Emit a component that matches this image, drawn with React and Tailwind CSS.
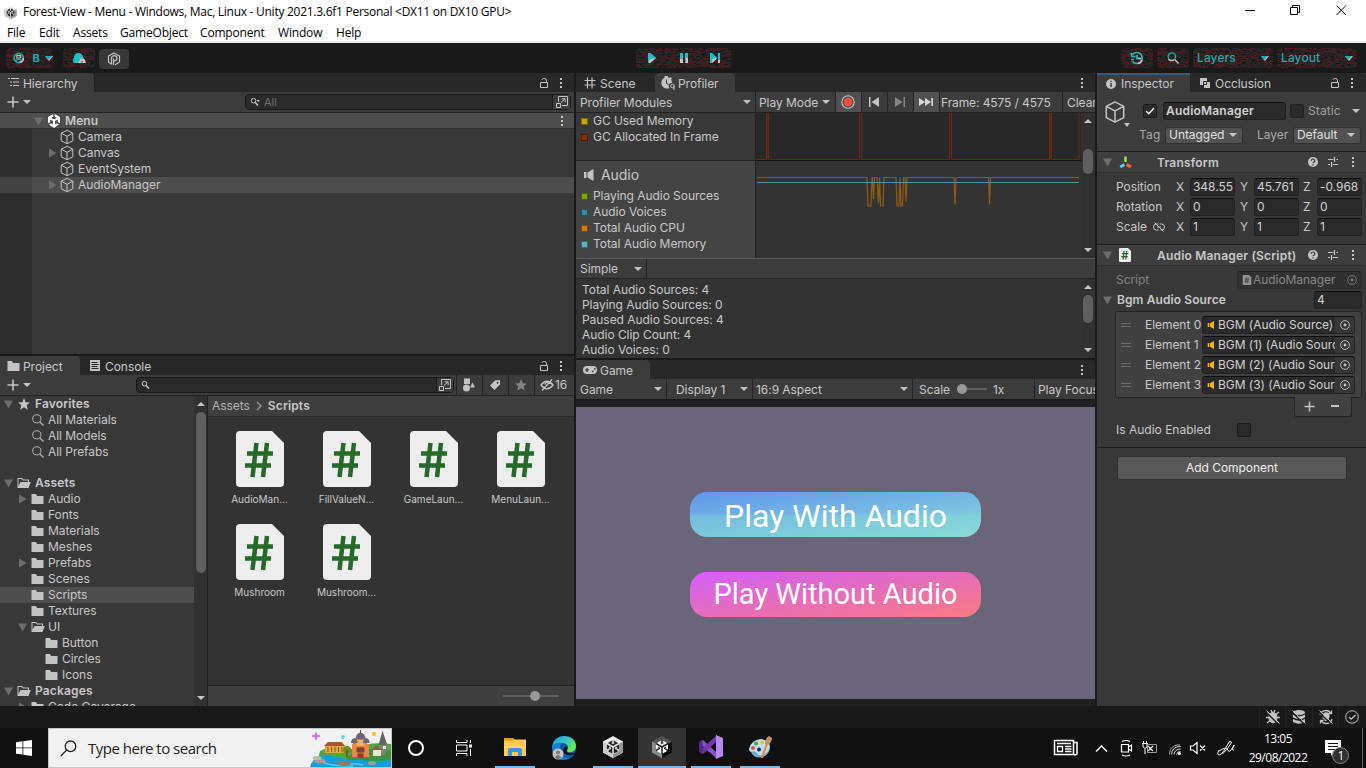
import React from "react";

/* ---------- small shared pieces ---------- */

function Caret({ className = "" }) {
  return (
    <svg className={"h-1 w-2 shrink-0 " + className} viewBox="0 0 8 4" fill="#c4c4c4">
      <path d="M0 0h8L4 4z" />
    </svg>
  );
}

function Fold({ open = false, hidden = false }) {
  return (
    <svg className={"h-2.5 w-2.5 shrink-0 " + (hidden ? "invisible" : "")} viewBox="0 0 10 10" fill="#6d6d6d">
      <path d={open ? "M0 1.500h9L4.500 9.500z" : "M1 0.500l7.500 4.500l-7.500 4.500z"} />
    </svg>
  );
}

function Dots({ className = "" }) {
  return (
    <svg className={"h-3 w-1 shrink-0 " + className} viewBox="0 0 4 12" fill="#c4c4c4">
      <path d="M1 1h2v2H1zM1 5h2v2H1zM1 9h2v2H1z" />
    </svg>
  );
}

function Lock({ className = "" }) {
  return (
    <svg className={"h-3 w-3 shrink-0 " + className} viewBox="0 0 12 12" fill="none" stroke="#c4c4c4">
      <path d="M2.500 5.500h7v5h-7zM8.500 5.500v-2.300a1.800 1.800 0 0 0-1.800-1.700h-1a1.800 1.800 0 0 0-1.700 1.300" />
    </svg>
  );
}

function Cube({ className = "h-4 w-4" }) {
  return (
    <svg className={"shrink-0 " + className} viewBox="0 0 16 16" fill="none" stroke="#c4c4c4" strokeLinejoin="round">
      <path d="M8 1.300l5.800 2.900v7.600L8 14.700l-5.800-2.900V4.200zM2.200 4.200L8 7.300l5.800-3.100M8 7.300v7.400" />
    </svg>
  );
}

function UnityMark({ className = "h-3.5 w-3.5", fill = "#fff" }) {
  return (
    <svg className={"shrink-0 " + className} viewBox="0 0 14 14" fill={fill}>
      <path d="M6.300 0v2.600L4.300 3.800l2.700 1.600l2.700-1.600l-2-1.200V0L13 3.100v6.200l-2.200-1.200V5.400L8 7v3.400l2-1.200l2 1.200L7 14l-5-3.600l2-1.200l2 1.200V7L3.200 5.400v2.700L1 9.300V3.100z" />
    </svg>
  );
}

function UnityCube({ size = "h-6 w-6", dark = false }) {
  return (
    <svg className={"shrink-0 " + size} viewBox="0 0 24 24">
      <path d="M12 1l10 5.500v11L12 23L2 17.500v-11z" fill={dark ? "#555" : "#eee"} />
      <path d="M12 12l10-5.500v11L12 23z" fill={dark ? "#080808" : "#999"} />
      <path d="M2 6.500L12 12v11L2 17.500z" fill={dark ? "#8b8b8b" : "#ccc"} />
      <path d="M12 5l6 3.500v7L12 19l-6-3.500v-7z" fill={dark ? "#fff" : "#222"} />
      <path d="M12 12V19M12 12L6 8.500M12 12l6-3.500M12 5v3M6 15.500l2.500-1.500M18 15.500L15.500 14" stroke={dark ? "#222" : "#e8e8e8"} strokeWidth="1.500" />
      <path d="M10 8l2-1l2 1l-2 1zM8 11.500l2 1v2l-2-1zM16 11.500l-2 1v2l2-1z" fill={dark ? "#333" : "#ddd"} />
    </svg>
  );
}

function Folder({ open = false }) {
  return open ? (
    <svg className="h-3.5 w-3.5 shrink-0" viewBox="0 0 14 14" fill="#c4c4c4">
      <path d="M0.500 2h4.500l1.500 1.500H12V6H11V4.500H6L4.500 3H1.500v7L3.500 6H13.800l-2.300 6H0.500z" />
    </svg>
  ) : (
    <svg className="h-3.5 w-3.5 shrink-0" viewBox="0 0 14 14" fill="#c4c4c4">
      <path d="M0.500 2h4.500l1 2H12.500v8H0.500z" />
    </svg>
  );
}

function Lens({ className = "h-3 w-3", stroke = "#b0b0b0" }) {
  return (
    <svg className={"shrink-0 " + className} viewBox="0 0 12 12" fill="none" stroke={stroke}>
      <circle cx="4.800" cy="4.800" r="4.100" />
      <path d="M7.800 7.800l3.700 3.700" strokeWidth="1.400" />
    </svg>
  );
}

function MiniLens({ menu = false }) {
  return (
    <svg className="h-2.5 w-2.5 shrink-0" viewBox="0 0 10 10" fill="none" stroke="#c4c4c4">
      <circle cx="3.500" cy="3.700" r="2.300" />
      <path d="M5.200 5.500L8 8.500" strokeWidth="1.500" />
      {menu && <path d="M6.500 3h3.500l-1.700 2z" fill="#c4c4c4" stroke="none" />}
    </svg>
  );
}

function Popout({ className = "" }) {
  return (
    <svg className={"h-3 w-3 shrink-0 " + className} viewBox="0 0 12 12" fill="none" stroke="#c4c4c4">
      <path d="M2.500 6V0.500h9v9H6M0.500 7.500h4v4h-4zM5 6.500L9 2.800M5.800 2.800H9.200V6" />
    </svg>
  );
}

function Star({ fill = "#c4c4c4", className = "h-3 w-3" }) {
  return (
    <svg className={"shrink-0 " + className} viewBox="0 0 12 12" fill={fill}>
      <path d="M6 0l1.700 4.200L12 4.500L8.700 7.300L9.800 11.700L6 9.300L2.200 11.700l1.100-4.400L0 4.500l4.300-0.300z" />
    </svg>
  );
}

function Target() {
  return (
    <svg className="h-2.5 w-2.5 shrink-0" viewBox="0 0 10 10">
      <circle cx="5" cy="5" r="4.400" fill="none" stroke="#c4c4c4" strokeWidth="0.900" />
      <circle cx="5" cy="5" r="1.400" fill="#c4c4c4" />
    </svg>
  );
}

function ScriptIcon({ className }) {
  return (
    <svg className={"shrink-0 " + className} viewBox="0 0 48 56">
      <path d="M4 0h32l12 12v40q0 4-4 4H4q-4 0-4-4V4q0-4 4-4z" fill="#eee" />
      <path d="M20.500 12l-4 34M31 12l-4 34M11 22.500h26M9 34.500h26" stroke="#256a28" strokeWidth="4.500" fill="none" />
    </svg>
  );
}

function Speaker({ fill = "#c4c4c4", className = "h-3 w-3" }) {
  return (
    <svg className={"shrink-0 " + className} viewBox="0 0 12 12" fill={fill}>
      <path d="M1 3h2.500v6H1zM4.500 3.500L10.500 0v12L4.500 8.500z" />
    </svg>
  );
}

function Plus({ className = "h-3 w-3" }) {
  return (
    <svg className={"shrink-0 " + className} viewBox="0 0 12 12" fill="#c4c4c4">
      <path d="M5.200 0.500h1.600v4.700h4.700v1.600H6.800v4.700H5.200V6.800H0.500V5.200h4.700z" />
    </svg>
  );
}

function ScrollBar({ className = "", thumb }) {
  return (
    <div className={"flex w-[14px] shrink-0 flex-col items-center bg-[#313131] " + className}>
      <svg className="mt-1.5 h-1 w-2 shrink-0" viewBox="0 0 8 4" fill="#c4c4c4"><path d="M0 4h8L4 0z" /></svg>
      <div className="flex w-full grow flex-col items-center">
        <div className={"w-[10px] rounded-full bg-[#5f5f5f] " + thumb} />
      </div>
      <Caret className="mb-1.5" />
    </div>
  );
}

/* ---------- speckled toolbar buttons ---------- */

function speckle(w, h, seed) {
  let s = seed;
  const next = () => {
    s = (s * 1103515245 + 12345) % 2147483648;
    return s / 2147483648;
  };
  const out = ["", ""];
  for (let y = 0; y < h; y++) {
    let x = 0;
    while (x < w) {
      const run = 1 + Math.floor(next() * 3.5);
      const r = next();
      const n = Math.min(run, w - x);
      if (r < 0.5) out[0] += `M${x} ${y}h${n}v1h-${n}z`;
      else if (r < 0.78) out[1] += `M${x} ${y}h${n}v1h-${n}z`;
      x += run;
    }
  }
  return out;
}

function Glitch({ w, seed, className, children }) {
  const [red, teal] = speckle(w, 20, seed);
  return (
    <div className={"relative h-5 shrink-0 overflow-hidden rounded-sm " + className}>
      <svg className="absolute inset-0 h-5" width={w} height="20" viewBox={`0 0 ${w} 20`} shapeRendering="crispEdges">
        <path d={red} fill="#481b1e" />
        <path d={teal} fill="#17292a" />
      </svg>
      <div className="relative flex h-5 items-center">{children}</div>
    </div>
  );
}

function PinkCaret({ className = "" }) {
  return (
    <svg className={"h-[5px] w-2 shrink-0 " + className} viewBox="0 0 8 5">
      <path d="M0 0h8L4 5z" fill="#f0b5b5" />
      <path d="M0 0h7L3 4z" fill="#13aeb2" />
    </svg>
  );
}

/* ---------- window chrome ---------- */

function TitleBar() {
  return (
    <div className="h-[43px] shrink-0 border-b-2 border-[#ececec] bg-white font-['Open_Sans','Noto_Sans',sans-serif] text-[12px] text-black">
      <div className="flex h-6 items-center">
        <div className="ml-[3px]"><UnityCube size="h-[15px] w-[15px]" /></div>
        <span className="ml-[5px] w-[700px] whitespace-pre tracking-[-0.27px]">Forest-View - Menu - Windows, Mac, Linux - Unity 2021.3.6f1 Personal &lt;DX11 on DX10 GPU&gt;</span>
        <svg className="ml-auto h-6 w-[140px]" viewBox="0 0 140 24" fill="none" stroke="#000">
          <path d="M19 10.500h10M64.500 7.500h7v7h-7zM66.500 7v-1.500h7v7h-2M110.500 5.500l9.500 9.500M120 5.500l-9.500 9.500" />
        </svg>
      </div>
      <div className="flex h-[17px] items-center pl-[7px] leading-none tracking-[-0.18px]">
        <span className="w-8">File</span>
        <span className="w-[34px]">Edit</span>
        <span className="w-[47px]">Assets</span>
        <span className="w-20">GameObject</span>
        <span className="w-[78px]">Component</span>
        <span className="w-[58px]">Window</span>
        <span>Help</span>
      </div>
    </div>
  );
}

function Toolbar() {
  return (
    <div className="flex h-[30px] shrink-0 items-start bg-[#191919] pt-[5px] pr-[9px]">
      <div className="flex w-[636px] pl-1.5">
        <Glitch w={47} seed={17} className="w-[47px]">
          <svg className="ml-[7px] h-3 w-3" viewBox="0 0 12 12" fill="none" strokeWidth="1.900">
            <circle cx="6" cy="6" r="4.800" stroke="#13aeb2" />
            <path d="M10.800 6a4.800 4.800 0 0 1-4 4.700" stroke="#f0b5b5" />
            <path d="M4 3.500h4v2.500H4z" stroke="#e5b5b5" strokeWidth="1.200" />
            <path d="M2.500 9q3.500-3.500 7 0" stroke="#13aeb2" strokeWidth="1.500" />
          </svg>
          <span className="ml-2 w-2 text-[11px] font-bold text-[#13aeb2]">B</span>
          <PinkCaret className="ml-[5px]" />
        </Glitch>
        <Glitch w={32} seed={91} className="ml-[10px] w-8">
          <svg className="ml-2 h-3 w-4" viewBox="0 0 16 12">
            <path d="M3.500 11a3 3 0 0 1-0.500-5q0-5 4.500-5q4 0 5 5v5z" fill="#13c0c2" />
            <path d="M9 6.500h3.500q2.500 1.500 2 4.500H12V9H10v2H6.500L9 8.500z" fill="#f6b9b9" />
          </svg>
        </Glitch>
        <div className="mt-px ml-1 flex h-5 w-[30px] items-center justify-center rounded-sm bg-[#383838]">
          <svg className="h-3.5 w-3.5" viewBox="0 0 14 14" fill="none" stroke="#c4c4c4" strokeWidth="1.200">
            <path d="M4.500 12.200L1.500 10V4L7 1l5.500 3v6L8 12.800M4.500 12.500V6.300a2.700 2.700 0 1 1 2.700 2.700H6.500M6.500 13V6.500" />
          </svg>
        </div>
      </div>
      <Glitch w={95} seed={43} className="w-[95px]">
        <svg className="h-5 w-[95px]" viewBox="0 0 95 20" fill="#13c0c2">
          <path d="M12 5h2.500l6 5l-6 5H12zM44 5h3v10h-3zM49 5h3v10h-3zM74 5h2l5.500 5L76 15h-2zM82 5h2v10h-2z" />
          <path d="M13 12l5-2v1.500l-4 3.500h-1zM44 11h3v4h-3zM50 10h2v5h-2zM76 12l4-2.500v2L76 15zM82 12h2v3h-2z" fill="#f0b5b5" />
        </svg>
      </Glitch>
      <div className="ml-auto flex text-[12px] font-medium text-[#2aa4a6]">
        <Glitch w={32} seed={7} className="w-8">
          <svg className="ml-[9px] h-3.5 w-3.5" viewBox="0 0 14 14" fill="none" stroke="#13c0c2" strokeWidth="1.700">
            <path d="M2.500 3.500a5.500 5.500 0 1 1 0 7M1 2l1 3.500h3.500M1 8.500h3M7 4v3.500h3" />
            <path d="M12 9a5 5 0 0 1-4 3.500M8.500 7.500H11" stroke="#f0b5b5" />
          </svg>
        </Glitch>
        <Glitch w={32} seed={71} className="ml-1 w-8">
          <svg className="ml-2.5 h-3 w-3" viewBox="0 0 12 12" fill="none" strokeWidth="1.300">
            <circle cx="4.800" cy="4.500" r="3.700" stroke="#13b5b8" />
            <path d="M7 8a4 4 0 0 1-5.500-1M7.800 7.500l3.700 4" stroke="#f0b5b5" />
          </svg>
        </Glitch>
        <Glitch w={80} seed={29} className="ml-1 w-20">
          <span className="ml-1 w-16 tracking-[0.1px]">Layers</span>
          <PinkCaret />
        </Glitch>
        <Glitch w={80} seed={53} className="ml-1 w-20">
          <span className="ml-1 w-16 tracking-[0.1px]">Layout</span>
          <PinkCaret />
        </Glitch>
      </div>
    </div>
  );
}

/* ---------- hierarchy ---------- */

function HierarchyRow({ name, fold, selected }) {
  return (
    <div className="flex h-4">
      <div className={"w-8 " + (selected ? "bg-[#434343]" : "bg-[#2d2d2d]")} />
      <div className={"flex grow items-center pl-4 " + (selected ? "bg-[#4d4d4d]" : "")}>
        <Fold hidden={!fold} />
        <Cube className="ml-px h-4 w-4" />
        <span className="ml-[3px]">{name}</span>
      </div>
    </div>
  );
}

function Hierarchy() {
  return (
    <section className="flex h-[281px] shrink-0 flex-col bg-[#383838]">
      <div className="flex h-[19px] shrink-0 items-center rounded-tr bg-[#282828]">
        <div className="flex h-[19px] w-[95px] items-center rounded-tr border-r border-[#222] bg-[#3c3c3c] pl-2">
          <svg className="h-3 w-3" viewBox="0 0 12 12" fill="#c4c4c4">
            <path d="M0 1h2v1H0zM3 1h8v1H3zM2 4.500h2v1H2zM5 4.500h6v1H5zM2 8h2v1H2zM5 8h6v1H5z" />
          </svg>
          <span className="ml-[3px] pt-0.5">Hierarchy</span>
        </div>
        <Lock className="ml-auto" />
        <Dots className="mr-[11px] ml-[9px]" />
      </div>
      <div className="flex h-[21px] shrink-0 items-center border-b border-[#232323] bg-[#3c3c3c] pr-[3px] pl-[7px]">
        <Plus />
        <Caret className="ml-1" />
        <div className="ml-auto flex h-4 w-[326px] items-center rounded border border-[#191919] bg-[#2a2a2a] pl-1">
          <MiniLens menu />
          <span className="ml-1 grow text-[11px] text-[#6f6f6f]">All</span>
          <div className="flex h-3.5 items-center border-l border-[#191919] bg-[#3c3c3c] pr-0.5 pl-[3px]"><Popout /></div>
        </div>
      </div>
      <div className="flex h-4 shrink-0 items-center border-b border-[#303030] bg-[#4d4d4d] pr-2.5 pl-[34px] font-semibold">
        <Fold open />
        <UnityMark className="ml-[3px] h-3.5 w-3.5" />
        <span className="ml-1 tracking-[0.1px]">Menu</span>
        <Dots className="ml-auto" />
      </div>
      <HierarchyRow name="Camera" />
      <HierarchyRow name="Canvas" fold />
      <HierarchyRow name="EventSystem" />
      <HierarchyRow name="AudioManager" fold selected />
      <div className="w-8 grow bg-[#2d2d2d]" />
    </section>
  );
}

/* ---------- project ---------- */

const tree = [
  { n: "Favorites", d: 0, fold: "open", icon: "star", bold: true },
  { n: "All Materials", d: 1, icon: "lens" },
  { n: "All Models", d: 1, icon: "lens" },
  { n: "All Prefabs", d: 1, icon: "lens" },
  null,
  { n: "Assets", d: 0, fold: "open", icon: "open", bold: true },
  { n: "Audio", d: 1, fold: "closed" },
  { n: "Fonts", d: 1 },
  { n: "Materials", d: 1 },
  { n: "Meshes", d: 1 },
  { n: "Prefabs", d: 1, fold: "closed" },
  { n: "Scenes", d: 1 },
  { n: "Scripts", d: 1, selected: true },
  { n: "Textures", d: 1 },
  { n: "UI", d: 1, fold: "open", icon: "open" },
  { n: "Button", d: 2 },
  { n: "Circles", d: 2 },
  { n: "Icons", d: 2 },
  { n: "Packages", d: 0, fold: "open", icon: "open", bold: true },
  { n: "Code Coverage", d: 1, fold: "closed" },
];
const indents = ["pl-1", "pl-[18px]", "pl-8"];

function TreeRow({ item }) {
  if (!item) return <div className="h-[15px] shrink-0" />;
  return (
    <div className={"flex h-4 shrink-0 items-center " + indents[item.d] + (item.selected ? " bg-[#4d4d4d]" : "")}>
      <Fold open={item.fold === "open"} hidden={!item.fold} />
      <div className="ml-[3px] flex w-[17px]">
        {item.icon === "star" ? <Star className="ml-px h-3 w-3" /> : item.icon === "lens" ? <Lens className="ml-px h-3 w-3" /> : <Folder open={item.icon === "open"} />}
      </div>
      <span className={"whitespace-nowrap " + (item.bold ? "ml-px font-semibold tracking-[0.15px]" : "")}>{item.n}</span>
    </div>
  );
}

function Asset({ name }) {
  return (
    <div className="flex h-[93px] w-[87px] flex-col items-center">
      <ScriptIcon className="h-14 w-12" />
      <span className="mt-[5px] text-[10px] leading-[14px] tracking-[0px] text-[#c8c8c8]">{name}</span>
    </div>
  );
}

function ToolCell({ className, children }) {
  return <div className={"flex h-full items-center justify-center border-l border-[#232323] pr-0.5 " + className}>{children}</div>;
}

function Project() {
  return (
    <section className="mt-0.5 flex h-[350px] shrink-0 flex-col bg-[#383838]">
      <div className="flex h-[19px] shrink-0 items-center rounded-tr bg-[#282828]">
        <div className="flex h-[19px] w-20 items-center rounded-tr bg-[#3c3c3c] pl-[7px]">
          <Folder />
          <span className="ml-0.5 pt-0.5">Project</span>
        </div>
        <svg className="ml-2.5 h-[11px] w-[10px]" viewBox="0 0 10 11">
          <path d="M0 0h10v11H0z" fill="#c4c4c4" />
          <path d="M1.500 2.500h6M1.500 4.500h7M1.500 6.500h6M1.500 8.500h7" stroke="#282828" />
        </svg>
        <span className="ml-[5px] pt-0.5">Console</span>
        <Lock className="ml-auto" />
        <Dots className="mr-[11px] ml-[9px]" />
      </div>
      <div className="flex h-[21px] shrink-0 items-center border-b border-[#232323] bg-[#3c3c3c] pl-1.5">
        <Plus className="ml-px h-3 w-3" />
        <Caret className="ml-1" />
        <div className="ml-auto flex h-4 w-[318px] items-center justify-between rounded border border-[#191919] bg-[#2a2a2a] pl-1">
          <MiniLens />
          <div className="flex h-3.5 items-center border-l border-[#191919] bg-[#3c3c3c] pr-0.5 pl-0.5"><Popout /></div>
        </div>
        <ToolCell className="ml-0.5 w-[26px]">
          <svg className="h-3.5 w-3.5" viewBox="0 0 14 14" fill="#c4c4c4"><path d="M2 0.500h6v5.500H2zM8 9.500L10.500 4.500L13 9.500z" /><circle cx="4.500" cy="10" r="3.500" /></svg>
        </ToolCell>
        <ToolCell className="w-[26px]">
          <svg className="h-3 w-3" viewBox="0 0 12 12" fill="#c4c4c4"><path fillRule="evenodd" d="M6 1.500L11 1v4.500L5.500 11L1 6.500zM8.500 2.800a0.900 0.900 0 1 0 0.100 0z" /></svg>
        </ToolCell>
        <ToolCell className="w-[26px]"><Star fill="#828282" /></ToolCell>
        <ToolCell className="w-[40px]">
          <svg className="h-3 w-3.5" viewBox="0 0 14 12" fill="none" stroke="#c4c4c4" strokeWidth="1.300"><path d="M1 6q6-7.500 12 0q-6 7.500-12 0zM2 11.500L12 0.500" /><path d="M5 5.500a2 2 0 0 1 3-1.800" /></svg>
          <span className="ml-px">16</span>
        </ToolCell>
      </div>
      <div className="flex h-[310px]">
        <div className="flex h-[310px] w-[194px] shrink-0 flex-col overflow-hidden">
          {tree.map((t, i) => <TreeRow key={i} item={t} />)}
        </div>
        <ScrollBar className="border-r border-[#222]" thumb="mt-1.5 h-[161px]" />
        <div className="flex min-w-0 flex-1 flex-col bg-[#333]">
          <div className="flex h-[21px] items-center border-b border-[#292929] bg-[#3f3f3f] pl-1">
            <span className="text-[#b0b0b0]">Assets</span>
            <svg className="mx-1.5 h-2.5 w-1.5" viewBox="0 0 6 10" fill="none" stroke="#999" strokeWidth="1.300"><path d="M1 1l4 4l-4 4" /></svg>
            <span className="font-semibold tracking-[0.15px]">Scripts</span>
          </div>
          <div className="flex grow flex-wrap content-start pt-3.5 pl-[8px]">
            <Asset name="AudioMan..." />
            <Asset name="FillValueN..." />
            <Asset name="GameLaun..." />
            <Asset name="MenuLaun..." />
            <Asset name="Mushroom" />
            <Asset name="Mushroom..." />
          </div>
          <div className="flex h-[21px] items-center justify-end border-t border-[#232323] bg-[#3f3f3f] pr-[15px]">
            <svg className="h-3 w-14" viewBox="0 0 56 12"><path d="M0 5h56v2H0z" fill="#5e5e5e" /><circle cx="32" cy="6" r="5" fill="#999" /></svg>
          </div>
        </div>
      </div>
    </section>
  );
}

/* ---------- profiler ---------- */

function Legend({ swatch, children }) {
  return (
    <div className="flex h-4 items-center pl-[5px]">
      <div className={"h-[7px] w-[7px] border border-black/40 " + swatch} />
      <span className="ml-[5px]">{children}</span>
    </div>
  );
}

function Profiler() {
  return (
    <section className="flex h-[285px] shrink-0 flex-col bg-[#383838]">
      <div className="flex h-[19px] shrink-0 items-center rounded-tr bg-[#282828]">
        <div className="flex w-[79px] items-center pl-2">
          <svg className="h-3 w-3" viewBox="0 0 12 12" fill="none" stroke="#c4c4c4" strokeWidth="1.200"><path d="M3.500 0.500v11M8 0.500v11M0.500 3.500h11M0.500 8h11" /></svg>
          <span className="ml-1 pt-0.5">Scene</span>
        </div>
        <div className="flex h-[19px] w-20 items-center rounded-t bg-[#3c3c3c] pl-1.5">
          <svg className="h-3.5 w-3.5" viewBox="0 0 14 14" fill="#c4c4c4">
            <path fillRule="evenodd" d="M3.500 0h3.500v1.500l1.500 0.500l1-1l1.500 1.500l-1 1A5 5 0 0 1 11 7H10A3 3 0 0 0 8.500 12A5 5 0 1 1 3.500 1.800zM5 3.500V7.500L7.500 9V8L6 7V3.500z" />
            <circle cx="11.500" cy="10" r="1.800" fill="none" stroke="#c4c4c4" /><path d="M12.500 10h1v4h-1z" />
          </svg>
          <span className="ml-[3px] pt-0.5">Profiler</span>
        </div>
        <Dots className="mr-[11px] ml-auto" />
      </div>
      <div className="flex h-[21px] shrink-0 items-center overflow-hidden border-b border-[#232323] bg-[#3c3c3c] whitespace-nowrap">
        <div className="flex h-5 w-[179px] shrink-0 items-center justify-between pr-1 pl-1"><span className="pt-px">Profiler Modules</span><Caret /></div>
        <div className="flex h-5 w-20 shrink-0 items-center justify-between border-l border-[#232323] pr-[5px] pl-[3px]"><span className="pt-px">Play Mode</span><Caret /></div>
        <ToolCell className="w-[26px] shrink-0 bg-[#505050]">
          <svg className="h-3.5 w-3.5" viewBox="0 0 14 14"><circle cx="7" cy="7" r="6.200" fill="none" stroke="#c4c4c4" strokeWidth="1.100" /><circle cx="7" cy="7" r="4.200" fill="#ff4b42" /></svg>
        </ToolCell>
        <ToolCell className="w-[26px] shrink-0"><svg className="h-2.5 w-2.5" viewBox="0 0 10 10" fill="#c4c4c4"><path d="M0 0h1.500v10H0zM10 0v10L2.500 5z" /></svg></ToolCell>
        <ToolCell className="w-[26px] shrink-0"><svg className="h-2.5 w-2.5" viewBox="0 0 10 10" fill="#858585"><path d="M8.500 0H10v10H8.500zM0 0v10L7.500 5z" /></svg></ToolCell>
        <ToolCell className="w-[26px] shrink-0 bg-[#505050]"><svg className="h-2 w-3.5" viewBox="0 0 14 8" fill="#d8d8d8"><path d="M0 0l6 4l-6 4zM6 0l6 4l-6 4zM12.300 0H14v8h-1.700z" /></svg></ToolCell>
        <div className="flex h-5 w-[123px] shrink-0 items-center border-l border-[#232323] pt-px pl-px tracking-[-0.1px]">Frame: 4575 / 4575</div>
        <div className="flex h-5 w-[33px] shrink-0 items-center overflow-hidden border-l border-[#232323] pt-px pl-1">Clear</div>
      </div>
      <div className="flex h-[145px] shrink-0">
        <div className="w-[180px] border-r border-[#232323]">
          <div className="h-12 border-b border-[#232323] bg-[#383838]">
            <Legend swatch="bg-[#c8a800]">GC Used Memory</Legend>
            <Legend swatch="bg-[#922b08]">GC Allocated In Frame</Legend>
          </div>
          <div className="h-[97px] bg-[#444]">
            <div className="flex h-[27px] items-center pl-1.5 text-[14px]"><Speaker className="mr-[5px] h-3 w-3.5" />Audio</div>
            <Legend swatch="bg-[#81a203]">Playing Audio Sources</Legend>
            <Legend swatch="bg-[#3288a5]">Audio Voices</Legend>
            <Legend swatch="bg-[#d77a02]">Total Audio CPU</Legend>
            <Legend swatch="bg-[#58b5bd]">Total Audio Memory</Legend>
          </div>
        </div>
        <svg className="h-[145px] w-[325px] shrink-0" viewBox="0 0 325 145" fill="none">
          <path d="M0 0h325v47H0z" fill="#282828" />
          <path d="M0 48h325v97H0z" fill="#333" />
          <path d="M1 46.500h9.500V0M12.500 0v46.500h91V0M105.500 0v46.500h88V0M195.500 0v46.500h98V0M295.500 0v46.500h27.500V0" stroke="#6b2714" />
          <path d="M11.500 0v46M294.500 0v46" stroke="#6b2714" strokeOpacity="0.600" />
          <path d="M0 47.500h325" stroke="#151515" />
          <path d="M1 64.500H111l1 28.500h3l1-28.500h0.500l1 21.500l1-21.500h2.500l1.500 25l1-25l1 28.500h2.500l1-28.500H140l1 28.500h2l1-28.500l1 28.500h1.500l1-28.500h1.500l1 24l1-24H198l1 27l1-27H232.500l1 27l1-27H323" stroke="#955a12" strokeWidth="1.200" />
          <path d="M1 69.500h322" stroke="#4e9295" strokeWidth="1.200" />
        </svg>
        <ScrollBar className="bg-[#292929]" thumb="mt-[26px] h-[25px]" />
      </div>
      <div className="flex h-[21px] shrink-0 items-center border-t border-b border-t-[#5a5a5a] border-b-[#232323] bg-[#3c3c3c]">
        <div className="flex h-full w-[71px] items-center justify-between border-r border-[#232323] pr-1 pl-1">Simple<Caret /></div>
      </div>
      <div className="flex h-[79px] shrink-0 bg-[#333]">
        <div className="grow pt-[3px] pl-1.5 leading-[15px]">
          <div>Total Audio Sources: 4</div>
          <div>Playing Audio Sources: 0</div>
          <div>Paused Audio Sources: 4</div>
          <div>Audio Clip Count: 4</div>
          <div>Audio Voices: 0</div>
        </div>
        <ScrollBar thumb="mt-1.5 h-7" />
      </div>
    </section>
  );
}

/* ---------- game view ---------- */

function Game() {
  return (
    <section className="mt-0.5 flex h-[346px] shrink-0 flex-col bg-[#202020]">
      <div className="flex h-[19px] shrink-0 items-center rounded-tr bg-[#282828]">
        <div className="flex h-[19px] w-[74px] items-center rounded-tr bg-[#3c3c3c] pl-[7px]">
          <svg className="h-2.5 w-3.5" viewBox="0 0 14 10"><rect y="1" width="14" height="8" rx="4" fill="#c4c4c4" /><path d="M2 5h4M4 3v4" stroke="#333" strokeWidth="1.200" /><path d="M9 6.500h1.500M11 4h1.500" stroke="#333" strokeWidth="1.500" /></svg>
          <span className="ml-[3px] pt-0.5">Game</span>
        </div>
        <Dots className="mr-[11px] ml-auto" />
      </div>
      <div className="flex h-[21px] shrink-0 items-center overflow-hidden border-b border-[#191919] bg-[#3c3c3c] whitespace-nowrap">
        <div className="flex h-full w-[90px] shrink-0 items-center justify-between pr-1 pl-1"><span className="pt-px">Game</span><Caret /></div>
        <div className="flex h-full w-[86px] shrink-0 items-center justify-between border-l border-[#232323] pr-1 pl-[9px]"><span className="pt-px">Display 1</span><Caret /></div>
        <div className="flex h-full w-40 shrink-0 items-center justify-between border-l border-[#232323] pr-1 pl-[3px]"><span className="pt-px">16:9 Aspect</span><Caret /></div>
        <div className="flex h-full w-[122px] shrink-0 items-center border-l border-[#232323] pl-1.5">
          <span className="w-[38px] pt-px">Scale</span>
          <svg className="h-3 w-[30px]" viewBox="0 0 30 12"><path d="M0 5h30v2H0z" fill="#5e5e5e" /><circle cx="5" cy="6" r="5" fill="#999" /></svg>
          <span className="ml-1.5 pt-px">1x</span>
        </div>
        <div className="flex h-full w-[61px] shrink-0 items-center overflow-hidden border-l border-[#232323] pt-px pl-[3px]">Play Focused</div>
      </div>
      <div className="mt-[7px] flex h-[292px] shrink-0 flex-col items-center bg-[#6a6579] pt-[85px] font-[Roboto,sans-serif] tracking-normal text-white">
        <div className="flex h-[45px] w-[291px] items-center justify-center rounded-[17px] bg-[linear-gradient(180deg,rgba(130,225,205,0)_46%,rgba(130,225,205,0.3)_54%),linear-gradient(173deg,#5f97ec_0%,#8ddadb_100%)] pt-0.5 text-[32px] leading-none">Play With Audio</div>
        <div className="mt-[35px] flex h-[45px] w-[291px] items-center justify-center rounded-[17px] bg-[linear-gradient(171deg,#d35ffb_0%,#e56dbb_50%,#fb7b82_100%)] text-[29px] leading-none">Play Without Audio</div>
      </div>
    </section>
  );
}

/* ---------- inspector ---------- */

function Field({ className, children }) {
  return <div className={"flex h-[18px] items-center overflow-hidden rounded-[3px] border border-[#212121] border-t-[#0d0d0d] bg-[#2a2a2a] px-0.5 text-[#d2d2d2] " + className}>{children}</div>;
}

function ComponentTools() {
  return (
    <div className="ml-auto flex items-center">
      <svg className="h-2.5 w-2.5" viewBox="0 0 10 10"><circle cx="5" cy="5" r="5" fill="#c4c4c4" /><path d="M3.300 3.800a1.700 1.700 0 1 1 2.500 1.400q-0.800 0.400-0.800 1" fill="none" stroke="#333" strokeWidth="1.200" /><path d="M4.400 7.200h1.200v1.200H4.400z" fill="#333" /></svg>
      <svg className="ml-2.5 h-2.5 w-2.5" viewBox="0 0 10 10" fill="none" stroke="#c4c4c4"><path d="M0 2.500h5.500M8.500 2.500H10M6.500 0v5M0 7.500h2M4.500 7.500H10M3.500 5v5" strokeWidth="1.200" /></svg>
      <Dots className="ml-[13px]" />
    </div>
  );
}

function Vector({ label, values, link }) {
  return (
    <div className="flex h-5 items-center pl-[19px]">
      <span className="flex w-[60px] items-center">
        {label}
        {link && <svg className="ml-1.5 h-2.5 w-3" viewBox="0 0 12 10" fill="none" stroke="#c4c4c4"><path d="M5.500 8H3.500a3 3 0 0 1 0-6h2M6.500 2h2a3 3 0 0 1 0 6h-1M4 5h4M1.500 0.500l9 9" /></svg>}
      </span>
      <span className="w-3.5">X</span>
      <Field className="w-[45px]">{values[0]}</Field>
      <span className="ml-[5px] w-3.5">Y</span>
      <Field className="w-[45px]">{values[1]}</Field>
      <span className="ml-1 w-3.5">Z</span>
      <Field className="w-[45px]">{values[2]}</Field>
    </div>
  );
}

function Element({ index, name }) {
  return (
    <div className="flex h-5 items-center pl-[5px]">
      <div className="h-1 w-2.5 border-y border-[#6b6b6b]" />
      <span className="ml-3.5 w-[57px] whitespace-nowrap">Element {index}</span>
      <Field className="w-[153px] !pr-0 !pl-[3px]">
        <Speaker fill="#f5b400" className="h-2 w-2.5" />
        <span className="ml-0.5 w-[119px] overflow-hidden whitespace-nowrap">{name}</span>
        <div className="flex h-4 w-[19px] items-center justify-center bg-[#373737]"><Target /></div>
      </Field>
    </div>
  );
}

function Inspector() {
  return (
    <section className="flex w-[269px] shrink-0 flex-col bg-[#383838]">
      <div className="flex h-[19px] shrink-0 items-center rounded-t bg-[#282828]">
        <div className="flex h-[19px] w-[93px] items-center border-t-2 border-[#2c5d87] bg-[#3c3c3c] pl-[9px]">
          <svg className="h-2.5 w-2.5" viewBox="0 0 10 10"><circle cx="5" cy="5" r="5" fill="#c4c4c4" /><path d="M4.300 1.700h1.400V3H4.300zM4.300 4h1.400v4H4.300z" fill="#333" /></svg>
          <span className="ml-[5px]">Inspector</span>
        </div>
        <svg className="ml-2.5 h-2.5 w-2.5" viewBox="0 0 10 10" fill="none" stroke="#c4c4c4"><path d="M0 0h7v7H0zM4 4h6v6H4z" fill="#c4c4c4" stroke="none" /><path d="M3.500 3.500h3v3h-3z" stroke="#282828" /></svg>
        <span className="ml-[5px] pt-0.5">Occlusion</span>
        <Lock className="ml-auto" />
        <Dots className="mr-3 ml-[9px]" />
      </div>
      <div className="flex h-[60px] shrink-0 border-b border-[#1d1d1d] bg-[#3c3c3c] pt-2">
        <div className="relative ml-1.5 h-[26px] w-[29px]">
          <Cube className="h-[24px] w-[24px]" />
          <svg className="absolute right-[2px] bottom-[-1px] h-1 w-1.5" viewBox="0 0 6 4" fill="#c4c4c4"><path d="M0 0h6L3 4z" /></svg>
        </div>
        <div className="grow">
          <div className="flex h-[22px] items-center">
            <div className="ml-[11px] flex h-[14px] w-[14px] items-center justify-center rounded-[2px] border border-[#191919] bg-[#2a2a2a]">
              <svg className="h-2 w-2.5" viewBox="0 0 10 8" fill="none" stroke="#fff" strokeWidth="1.500"><path d="M1 4l2.800 2.700L9 1" /></svg>
            </div>
            <Field className="ml-1.5 w-[123px] font-semibold tracking-[0.2px]">AudioManager</Field>
            <div className="ml-1 h-[14px] w-[14px] rounded-[2px] border border-[#222] bg-[#2a2a2a]" />
            <span className="ml-1 tracking-[0.1px] text-[#a0a0a0]">Static</span>
            <Caret className="mr-1.5 ml-auto" />
          </div>
          <div className="mt-0.5 flex h-[22px] items-center">
            <span className="ml-[7px] w-[26px] tracking-[0.2px] text-[#a8a8a8]">Tag</span>
            <div className="flex h-[17px] w-[78px] items-center justify-between rounded-[3px] border border-[#303030] bg-[#515151] pr-[5px] pl-[3px] text-[#e0e0e0]">Untagged<Caret /></div>
            <span className="ml-3.5 w-9 text-[#a8a8a8]">Layer</span>
            <div className="flex h-[17px] w-[68px] items-center justify-between rounded-[3px] border border-[#303030] bg-[#515151] pr-[5px] pl-[3px] text-[#e0e0e0]">Default<Caret /></div>
          </div>
        </div>
      </div>
      <div className="flex h-[21px] shrink-0 items-center border-b border-[#303030] bg-[#3e3e3e] pr-[11px] pl-1.5">
        <Fold open />
        <svg className="ml-1.5 h-[13px] w-[13px]" viewBox="0 0 13 13" strokeWidth="2.400"><path d="M6.500 0.500v5.500" stroke="#a5e84a" /><path d="M5.300 8.500l-4 2.500" stroke="#62c5f8" strokeWidth="3" /><path d="M7.700 8.500l4.300 2.500" stroke="#ff6237" strokeWidth="3" /></svg>
        <span className="ml-[25px] pt-px font-semibold tracking-[0.2px]">Transform</span>
        <ComponentTools />
      </div>
      <div className="h-[72px] shrink-0 border-b border-[#1d1d1d] pt-1">
        <Vector label="Position" values={["348.55", "45.761", "-0.968"]} />
        <Vector label="Rotation" values={["0", "0", "0"]} />
        <Vector label="Scale" values={["1", "1", "1"]} link />
      </div>
      <div className="flex h-[21px] shrink-0 items-center border-b border-[#303030] bg-[#3e3e3e] pr-[11px] pl-1.5">
        <Fold open />
        <ScriptIcon className="ml-1.5 h-[14px] w-3" />
        <span className="ml-[26px] pt-px font-semibold tracking-[0.2px] whitespace-nowrap">Audio Manager (Script)</span>
        <ComponentTools />
      </div>
      <div className="mt-1 flex h-5 shrink-0 items-center pr-1 pl-[19px] opacity-50">
        <span className="w-[121px]">Script</span>
        <Field className="grow !px-1">
          <ScriptIcon className="h-2.5 w-2.5" />
          <span className="ml-px">AudioManager</span>
          <div className="ml-auto"><Target /></div>
        </Field>
      </div>
      <div className="flex h-5 shrink-0 items-center pr-1 pl-1.5">
        <Fold open />
        <span className="ml-1 font-semibold tracking-[0.1px]">Bgm Audio Source</span>
        <Field className="ml-auto w-12">4</Field>
      </div>
      <div className="mt-px mr-1 ml-[18px] h-[87px] shrink-0 rounded-[3px] border border-[#242424] bg-[#414141] pt-[3px]">
        <Element index={0} name="BGM (Audio Source)" />
        <Element index={1} name="BGM (1) (Audio Source)" />
        <Element index={2} name="BGM (2) (Audio Source)" />
        <Element index={3} name="BGM (3) (Audio Source)" />
      </div>
      <div className="mr-3.5 -mt-px flex h-5 w-[58px] shrink-0 items-center justify-center gap-4 self-end rounded-b-[3px] border border-t-0 border-[#242424] bg-[#414141] pr-[3px] pb-px">
        <Plus className="h-[11px] w-[11px]" />
        <div className="h-[2px] w-2 bg-[#c4c4c4]" />
      </div>
      <div className="mt-[3px] flex h-5 shrink-0 items-center pl-[19px]">
        <span className="w-[121px] tracking-[0px]">Is Audio Enabled</span>
        <div className="h-3.5 w-3.5 rounded-[2px] border border-[#191919] bg-[#2a2a2a]" />
      </div>
      <div className="mt-[7px] h-px shrink-0 bg-[#1d1d1d]" />
      <div className="mr-[19px] ml-5 mt-2 flex h-6 shrink-0 items-center justify-center rounded-[3px] border border-[#303030] bg-[#585858] text-[#eee]">Add Component</div>
    </section>
  );
}

/* ---------- status bar and taskbar ---------- */

function StatusBar() {
  return (
    <div className="flex h-[22px] shrink-0 justify-end bg-[#191919] pr-px">
      <div className="flex w-[26px] items-center justify-center border-l border-[#232323]">
        <svg className="h-4 w-4" viewBox="0 0 16 16" stroke="#c4c4c4" fill="#c4c4c4"><ellipse cx="8" cy="8.500" rx="4" ry="5.300" /><path d="M2 3l3 2.500M14 3l-3 2.500M1 8.500h4M15 8.500h-4M2 14l3-2.500M14 14l-3-2.500M6 1l1 2M10 1L9 3" strokeWidth="1.300" /><path d="M0 2l13 13" stroke="#191919" strokeWidth="1.300" /><path d="M1.500 1.500l13 13" /></svg>
      </div>
      <div className="flex w-[27px] items-center justify-center border-l border-[#232323]">
        <svg className="h-4 w-4" viewBox="0 0 16 16" fill="#c4c4c4"><ellipse cx="8" cy="3.500" rx="6" ry="2.500" /><path d="M2 5.500q6 3.500 12 0v3q-6 3.500-12 0zM2 10q6 3.500 12 0v3q-6 3.500-12 0z" /><path d="M0 2l13 13" stroke="#191919" strokeWidth="1.300" /><path d="M1.500 1.500l13 13" stroke="#c4c4c4" /></svg>
      </div>
      <div className="flex w-[26px] items-center justify-center border-l border-[#232323]">
        <svg className="h-4 w-4" viewBox="0 0 16 16" fill="none" stroke="#c4c4c4" strokeWidth="1.300"><path d="M2 6a6 6 0 0 1 11-1.500M14 10a6 6 0 0 1-11 1.500M10.500 4.500h3v-3M5.500 11.500h-3v3" /><circle cx="8" cy="7" r="3" fill="#c4c4c4" /><path d="M6.500 11h3" strokeWidth="2" /><path d="M0 2l13 13" stroke="#191919" /><path d="M1.500 1.500l13 13" strokeWidth="1" /></svg>
      </div>
      <div className="flex w-[27px] items-center justify-center border-l border-[#232323]">
        <svg className="h-3.5 w-3.5" viewBox="0 0 14 14" fill="none" stroke="#c4c4c4"><circle cx="7" cy="7" r="6.300" /><path d="M4 7l2.200 2.200L10.500 5" strokeWidth="1.300" /></svg>
      </div>
    </div>
  );
}

function SearchArt() {
  return (
    <svg className="ml-auto h-[38px] w-[82px] shrink-0" viewBox="0 0 82 38">
      <path d="M11 22Q24 15 42 20q20-8 40-5v19H8z" fill="#4fa83f" />
      <path d="M42 25q20-8 40-3v14H30z" fill="#3d9142" />
      <path d="M1 38Q4 26 20 26q14 5 30 5q18 2 32 0v7z" fill="#129fdd" />
      <path d="M8 31q14 7 36 6M36 35q12-1 18 1" stroke="#5cc7f1" strokeWidth="1.500" fill="none" />
      <path d="M16 17l3-4h14l3 4v7H16z" fill="#e4a640" /><path d="M15 17l4-4h13l4 4z" fill="#ad552a" />
      <path d="M19 18v5M22.500 18v5M26 18v5M29.500 18v5M33 18v5" stroke="#8b5a20" />
      <circle cx="38" cy="21" r="4" fill="#6a9028" /><path d="M38 21v7" stroke="#7b4b20" strokeWidth="1.500" />
      <path d="M44 13h14v15H44z" fill="#e4763c" /><path d="M43 15h5v13h-5zM55 15h5v13h-5z" fill="#f1844a" />
      <path d="M47.500 10h8v7h-8z" fill="#f5af60" /><path d="M46.500 10.500q0-6 5-7q5 1 5 7zM42 14q0-4 3.300-5q3.300 1 3.300 5zM54 14q0-4 3.300-5q3.300 1 3.300 5z" fill="#6c6673" />
      <path d="M51.500 1v3M48 19h7v4h-7zM49 25h5v3h-5z" stroke="#814034" fill="#754537" />
      <path d="M71 15l3.500-9l3.500 9v11h-7z" fill="#84827c" /><path d="M69.500 16l4-14.500l4.500 14.500z" fill="#646465" />
      <path d="M64 21l4-4l4 4v6h-8z" fill="#f0e4cc" /><path d="M62.500 21l5-5l5.500 5z" fill="#846253" />
      <path d="M74 17h3v3h-3z" fill="#eee" /><circle cx="79" cy="25" r="3" fill="#4d8a2b" />
      <ellipse cx="11" cy="32" rx="5.500" ry="2.500" fill="#a69d91" /><ellipse cx="8" cy="29" rx="4.500" ry="2" fill="#c1b8a9" />
      <ellipse cx="35" cy="34.500" rx="7" ry="2.500" fill="#837c73" /><ellipse cx="63" cy="34" rx="4" ry="2" fill="#a69d91" />
      <path d="M7 3.500l1 2.500L11 7l-3 1L7 11L6 8L3 7l3-1z" fill="#dc72ef" stroke="#dc72ef" />
      <circle cx="34" cy="8" r="1.900" fill="#5bd4ec" /><circle cx="65" cy="5" r="2" fill="#ffb40d" />
    </svg>
  );
}

function TaskSlot({ className = "", children }) {
  return <div className={"flex h-10 shrink-0 items-center justify-center " + className}>{children}</div>;
}

function Taskbar() {
  return (
    <div className="flex h-10 shrink-0 items-center bg-[#101010] font-['Open_Sans','Noto_Sans',sans-serif] text-white">
      <TaskSlot className="w-12">
        <svg className="h-4 w-4" viewBox="0 0 16 16" fill="#fff"><path d="M0 2.300L6.500 1.300v6.200H0zM7.300 1.200L16 0v7.500H7.300zM0 8.300h6.500v6.300L0 13.700zM7.300 8.300H16V16l-8.700-1.300z" /></svg>
      </TaskSlot>
      <div className="flex h-10 w-[344px] items-center border border-[#c5c5c5] bg-[#f2f2f2] text-[#222]">
        <svg className="ml-[11px] h-[17px] w-[17px]" viewBox="0 0 17 17" fill="none" stroke="#222" strokeWidth="1.300"><circle cx="10.500" cy="6.300" r="5.300" /><path d="M6.700 10L0.800 16" /></svg>
        <span className="ml-[11px] text-[15px] tracking-[-0.5px] whitespace-nowrap">Type here to search</span>
        <SearchArt />
      </div>
      <TaskSlot className="w-12"><div className="h-4 w-4 rounded-full border-2 border-white" /></TaskSlot>
      <TaskSlot className="w-12">
        <svg className="h-4 w-4" viewBox="0 0 16 16" fill="none" stroke="#fff"><path d="M0.500 0v2.500h10.500V0M0.500 16v-2.500h10.500V16M0.500 5h10.500v6H0.500zM14.500 0v3M14.500 9v7" /><path d="M13 4.500h3v3h-3z" fill="#fff" stroke="none" /></svg>
      </TaskSlot>
      <TaskSlot className="ml-[7px] w-10 border-b-2 border-[#76b9ed]">
        <svg className="h-[18px] w-[22px]" viewBox="0 0 22 18"><path d="M0 0h9l1.500 1.500H22V18H0z" fill="#ffcb4d" /><path d="M0 0h9l1 2.500H0z" fill="#e69b00" /><path d="M4 18v-6q0-2 2-2h10q2 0 2 2v6h-4v-4H8v4z" fill="#3a96dd" /><path d="M0 8h22v2H0z" fill="#ffd666" /></svg>
      </TaskSlot>
      <TaskSlot className="ml-[9px] w-10">
        <svg className="h-6 w-6" viewBox="0 0 24 24">
          <defs><linearGradient id="edgeTop" x1="0" y1="0" x2="1" y2="0.500"><stop offset="0" stopColor="#1b9de2" /><stop offset="0.550" stopColor="#35c1c7" /><stop offset="1" stopColor="#66eb54" /></linearGradient></defs>
          <circle cx="12" cy="12" r="12" fill="#0c59a4" />
          <path d="M0 11Q2 0 12.500 0Q24 1 24 11q-1 6-8 5q-2-1 0-4q0-5-6-5Q3 6.500 0 11z" fill="url(#edgeTop)" />
          <path d="M0 11q3-5 9.500-4q-3 3-1 9q2 5 8 6.500Q6 27 1 17z" fill="#1480d2" />
          <path d="M15 16q4 3 8 0l-1 2q-5 3-10-1q-2-4 2-7q2 1 1.500 3q-1.500 2-0.500 3z" fill="#101010" />
          <circle cx="6" cy="18" r="5.500" fill="#c6c6c6" /><circle cx="6" cy="16.500" r="2" fill="#777" /><path d="M2.500 21.500q3.500-5 7 0q-3.500 3-7 0z" fill="#777" />
        </svg>
      </TaskSlot>
      <TaskSlot className="ml-[9px] w-10 border-b-2 border-[#76b9ed]"><UnityCube /></TaskSlot>
      <TaskSlot className="ml-[5px] w-12 border-b-2 border-[#76b9ed] bg-[#343434]"><UnityCube dark /></TaskSlot>
      <TaskSlot className="ml-[5px] w-10 border-b-2 border-[#76b9ed]">
        <svg className="h-6 w-6" viewBox="0 0 24 24"><path d="M1 6.500L4 5l14 13v6L1.500 9z" fill="#8650ce" /><path d="M1 17.500L4 19L18 6V0L1.500 15z" fill="#7536ad" /><path d="M0 7.500L3.500 5v14L0 16.500z" fill="#5b258d" /><path d="M17 0l7 3v18l-7 3z" fill="#b68af0" /></svg>
      </TaskSlot>
      <TaskSlot className="ml-[9px] w-10 border-b-2 border-[#76b9ed]">
        <svg className="h-6 w-6" viewBox="0 0 24 24"><path d="M1 14Q3 5 13 4q9 1 9 8q-1 8-10 9q-4 0-4-3q-1-2-4-1q-3 0-3-3z" fill="#b9dff0" /><path d="M3 17q4-1 6 1q0 3 6 2q5-2 7-7q-1 8-10 9.500q-7 0-9-5.500z" fill="#71aac8" /><circle cx="5" cy="13" r="2" fill="#e95145" /><circle cx="8" cy="8.500" r="2" fill="#50a83b" /><circle cx="14" cy="7.500" r="2" fill="#f2bf23" /><circle cx="11" cy="14.500" r="2" fill="#173050" /><path d="M13 23l5-15l2 1l-5 14z" fill="#eb8a2f" /><path d="M17 9q0-6 4-8l3 2q0 4-4 7z" fill="#bd9066" /></svg>
      </TaskSlot>
      <svg className="mr-0.5 ml-auto h-10 w-[190px]" viewBox="0 0 190 40" fill="none" stroke="#fff">
        <path d="M5.500 12.500h19v14h-19zM25 14.500h3v11q0 1.500-3 1.500M8 15.500h14" strokeWidth="1.500" />
        <path d="M8.500 18.500h5v5h-5zM16 18.500h6.500M16 21h6.500M16 23.500h6.500" strokeWidth="1.300" />
        <path d="M47 23.500l5.500-5.500l5.500 5.500" strokeWidth="1.400" />
        <path d="M72.500 16.500h7v7.500h-7zM79.500 19l3-2v6l-3-2M73 13.500q4-2 8 0M73 27q4 2 8 0" strokeWidth="1.200" />
        <path d="M93 15.500h6M94.500 13v3M97.500 13v3M94 16v3q2 3 4 0v-3M96 21v5" /><path d="M98.500 16.500h9v8h-9z" stroke="#999" /><path d="M99 18l5 5M104 18l-5 5" strokeWidth="1.200" />
        <path d="M120.500 26.500a9 9 0 0 1 10.500-9.500" stroke="#aaa" /><path d="M122.500 26.500a8 8 0 0 1 9-8M125 26.500a6 6 0 0 1 6.500-5.500M127.500 26.500a4 4 0 0 1 4-3" stroke="#ddd" /><circle cx="130.500" cy="25.500" r="1.500" fill="#fff" stroke="none" />
        <path d="M141.500 18h2.500l4-3.500v11l-4-3.500h-2.500zM151 17.500l5 5M156 17.500l-5 5" strokeWidth="1.200" />
        <path d="M170 22q-3 5 1 5q3-2 8-11q1.500-4 3.500-2q0 2-9 12M170 23q7-5 9-1q1 4 5-3q2-3 1-2q-3 6 0 5" />
      </svg>
      <div className="flex w-[74px] flex-col items-center text-[12px] tracking-[-0.5px]">
        <span className="leading-[20px]">13:05</span>
        <span className="leading-[18px]">29/08/2022</span>
      </div>
      <svg className="mr-2 ml-[5px] h-10 w-[34px]" viewBox="0 0 34 40">
        <path d="M5 12h16v13h-7l-3 3v-3H5z" fill="#fff" /><path d="M8 15.500h10M8 18.500h10M8 21.500h7" stroke="#101010" />
        <circle cx="20.500" cy="27.500" r="8" fill="#303030" stroke="#888" />
        <text x="17.500" y="32" fontSize="12" fill="#fff" fontFamily="Open Sans">1</text>
      </svg>
      <div className="h-10 w-px bg-[#666]" />
      <div className="w-[3px]" />
    </div>
  );
}

export default function App() {
  return (
    <div className="flex h-[768px] w-[1366px] flex-col overflow-hidden bg-[#191919] font-[Inter,sans-serif] text-[12px] leading-4 tracking-[-0.05px] text-[#c8c8c8]">
      <TitleBar />
      <Toolbar />
      <div className="flex h-[633px] shrink-0">
        <div className="flex w-[574px] shrink-0 flex-col">
          <Hierarchy />
          <Project />
        </div>
        <div className="ml-0.5 flex w-[519px] shrink-0 flex-col">
          <Profiler />
          <Game />
        </div>
        <div className="w-0.5 shrink-0" />
        <Inspector />
      </div>
      <StatusBar />
      <Taskbar />
    </div>
  );
}
